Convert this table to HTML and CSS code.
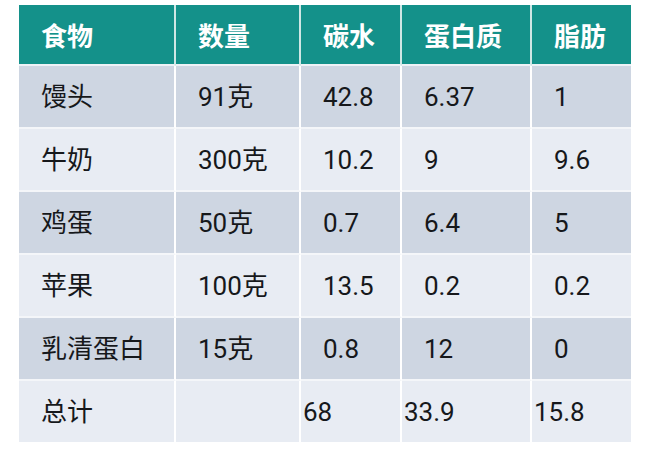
FILE: index.html
```html
<!DOCTYPE html>
<html lang="zh-CN">
<head>
<meta charset="utf-8">
<title>食物营养表</title>
<link rel="stylesheet" href="styles.css">
</head>
<body>
<table class="nutri">
  <colgroup>
    <col class="c-food">
    <col class="c-qty">
    <col class="c-carb">
    <col class="c-prot">
    <col class="c-fat">
  </colgroup>
  <thead>
    <tr class="head">
      <th>食物</th><th>数量</th><th>碳水</th><th>蛋白质</th><th>脂肪</th>
    </tr>
  </thead>
  <tbody>
    <tr class="dark"><td>馒头</td><td>91克</td><td>42.8</td><td>6.37</td><td>1</td></tr>
    <tr class="light"><td>牛奶</td><td>300克</td><td>10.2</td><td>9</td><td>9.6</td></tr>
    <tr class="dark"><td>鸡蛋</td><td>50克</td><td>0.7</td><td>6.4</td><td>5</td></tr>
    <tr class="light"><td>苹果</td><td>100克</td><td>13.5</td><td>0.2</td><td>0.2</td></tr>
    <tr class="dark"><td>乳清蛋白</td><td>15克</td><td>0.8</td><td>12</td><td>0</td></tr>
    <tr class="light total"><td>总计</td><td></td><td class="tight">68</td><td class="tight">33.9</td><td class="tight">15.8</td></tr>
  </tbody>
</table>
</body>
</html>
```

FILE: styles.css
```css
html, body {
  margin: 0;
  padding: 0;
  background: #ffffff;
}

body {
  padding: 5px 0 0 19px;
  font-family: "Roboto", "Noto Sans CJK SC", "Noto Sans", sans-serif;
}

.nutri {
  width: 612px;
  table-layout: fixed;
  border-collapse: separate;
  border-spacing: 0;
  font-size: 26px;
  line-height: 1;
}

.c-food { width: 157px; }
.c-qty { width: 125px; }
.c-carb { width: 101px; }
.c-prot { width: 130px; }
.c-fat { width: 99px; }

.nutri th,
.nutri td {
  padding: 0 0 0 22px;
  text-align: left;
  vertical-align: middle;
  border-right: 2px solid #ffffff;
  border-bottom: 2px solid #f4f6f9;
  white-space: nowrap;
}

.nutri th:last-child,
.nutri td:last-child {
  border-right: none;
}

.nutri tbody tr:last-child td {
  border-bottom: none;
}

.head {
  height: 61px;
}

.head th {
  background: #14918a;
  color: #ffffff;
  font-family: "Noto Sans CJK SC", sans-serif;
  font-weight: 700;
  border-right-color: #cfe7e5;
  border-bottom-color: #eef2f6;
}

tbody tr {
  height: 63px;
}

tbody tr.total {
  height: 61px;
}

.nutri td {
  color: #16181b;
}

.dark td {
  background: #ced6e2;
}

.light td {
  background: #e8ecf3;
}

.nutri td.tight {
  padding-left: 2px;
}
```
